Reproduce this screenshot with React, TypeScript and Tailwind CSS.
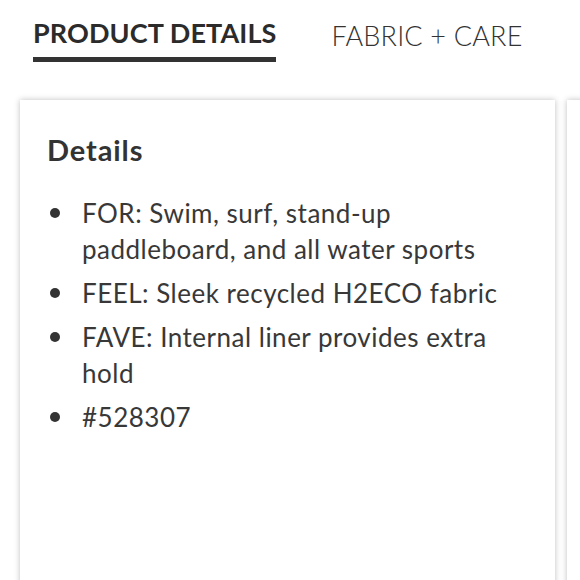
import React from 'react';

const items = [
  'FOR: Swim, surf, stand-up paddleboard, and all water sports',
  'FEEL: Sleek recycled H2ECO fabric',
  'FAVE: Internal liner provides extra hold',
  '#528307',
];

export default function App() {
  return (
    <div className="w-[580px] h-[580px] overflow-hidden bg-white text-[#333] font-['Lato',sans-serif]">
      {/* Tabs */}
      <div className="flex items-start pt-[17px] pl-[33px] gap-[55px]">
        <div className="flex flex-col">
          <span className="text-[27px] font-bold leading-[32px] tracking-[0.1px] text-[#2b2b2b]">PRODUCT DETAILS</span>
          <span className="mt-[8px] h-[5px] bg-[#333]" />
        </div>
        <span className="text-[27px] font-light leading-[32px] pt-[3px] tracking-[0.2px] text-[#333]">FABRIC + CARE</span>
      </div>

      {/* Cards */}
      <div className="flex gap-[12px] pl-[20px] mt-[38px]">
        <div className="w-[535px] h-[500px] shrink-0 bg-white shadow-[0_0_6px_rgba(0,0,0,0.25)] pl-[27px] pt-[32px]">
          <h2 className="text-[29px] font-bold leading-[36px] tracking-[0.9px] text-[#333]">Details</h2>
          <ul className="mt-[27px] flex flex-col gap-[8px]">
            {items.map(t => (
              <li key={t} className="flex text-[26px] leading-[36px] tracking-[0.5px] text-[#383838]">
                <span className="w-[35px] shrink-0 flex pt-[13px] pl-[3px]">
                  <span className="w-[10px] h-[10px] rounded-full bg-[#333]" />
                </span>
                <span className="w-[430px]">{t}</span>
              </li>
            ))}
          </ul>
        </div>
        <div className="w-[300px] h-[500px] shrink-0 bg-white shadow-[0_0_6px_rgba(0,0,0,0.25)]" />
      </div>
    </div>
  );
}
